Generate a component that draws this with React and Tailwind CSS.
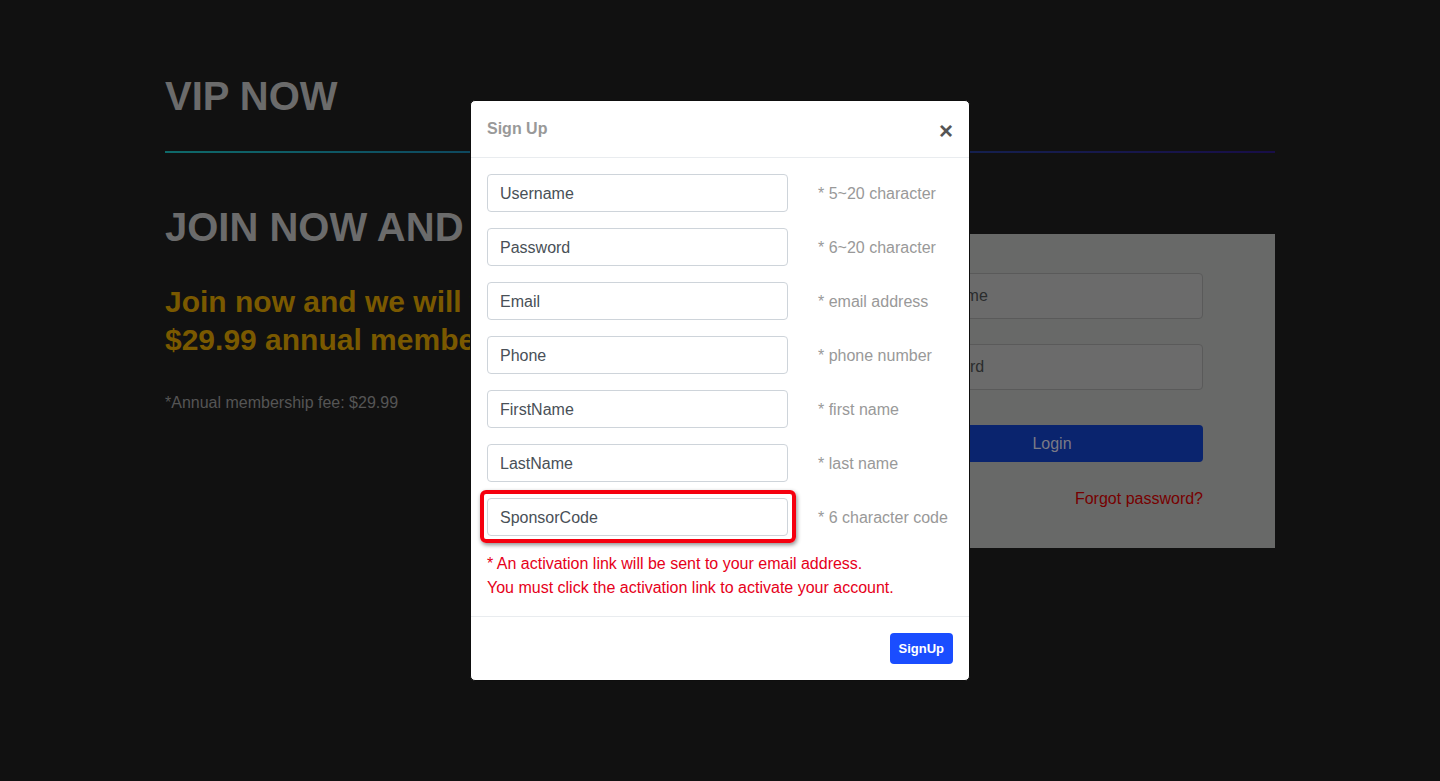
import React from "react";

const FIELDS = [
  { name: "Username", hint: "* 5~20 character" },
  { name: "Password", hint: "* 6~20 character" },
  { name: "Email", hint: "* email address" },
  { name: "Phone", hint: "* phone number" },
  { name: "FirstName", hint: "* first name" },
  { name: "LastName", hint: "* last name" },
  { name: "SponsorCode", hint: "* 6 character code", marked: true },
];

function Field({ name, hint, marked }) {
  return (
    <div className="mb-4 flex items-center">
      <div className="relative w-[301px]">
        <input
          className="block h-[38px] w-full rounded-[4px] border border-[#ced4da] bg-white px-3 pt-[1px] text-[16px] text-[#495057] outline-none placeholder:text-[#495057]"
          placeholder={name}
        />
        {marked && (
          <div className="pointer-events-none absolute -bottom-[7px] -left-[7px] -right-[8px] -top-[8px] rounded-[6px] border-4 border-[#f5000f] shadow-[1px_2px_4px_rgba(0,0,0,0.45)]" />
        )}
      </div>
      <span className="ml-[30px] pt-[1px] text-[16px] text-[#999]">{hint}</span>
    </div>
  );
}

export default function App() {
  // page colours are the dimmed tones seen through the modal backdrop
  return (
    <div className="relative h-[781px] overflow-hidden bg-[#111] font-['Liberation_Sans',Arial,sans-serif]">
      <div className="mx-auto w-[1110px] pt-[72px]">
        <h1 className="text-[40px] font-bold leading-[48px] text-[#6b6b6b]">VIP NOW</h1>
        <div className="mt-[31px] h-[2px] bg-linear-to-r from-[#0f6a6a] via-[#0e2d54] to-[#180e48]" />

        <div className="flex">
          <div className="w-[664px] pt-[50px]">
            <h2 className="text-[40px] font-bold leading-[48px] text-[#6b6b6b]">JOIN NOW AND GET VIP</h2>
            <p className="mt-[32px] text-[30px] font-bold leading-[38px] text-[#7a5900]">
              Join now and we will waive the
              <br />
              $29.99 annual membership fee!
            </p>
            <p className="mt-[32px] text-[16px] leading-[24px] text-[#555]">*Annual membership fee: $29.99</p>
          </div>

          <div className="mt-[81px] flex-1">
            <div className="bg-[#686968] px-[72px] pb-[37px] pt-[39px]">
              <input
                className="block h-[46px] w-full rounded-[4px] border border-[#5a5a5a] bg-[#6b6b6b] px-3 text-[16px] placeholder:text-[#2a2c2d]"
                placeholder="Username"
              />
              <input
                className="mt-[25px] block h-[46px] w-full rounded-[4px] border border-[#5a5a5a] bg-[#6b6b6b] px-3 text-[16px] placeholder:text-[#2a2c2d]"
                placeholder="Password"
                type="password"
              />
              <button className="mt-[35px] block h-[37px] w-full rounded-[4px] bg-[#0a246e] text-[16px] text-[#7a7a86]">Login</button>
              <p className="mt-[25px] text-right text-[16px] leading-[24px] text-[#770000]">Forgot password?</p>
            </div>
          </div>
        </div>
      </div>

      {/* modal layer */}
      <div className="absolute inset-0 flex justify-center pt-[100px]">
        <div className="h-fit w-[500px] rounded-[5px] border border-[#0e0e0e] bg-white">
          <div className="flex h-[57px] items-center justify-between border-b border-[#e9ecef] px-4">
            <span className="text-[16px] font-bold text-[#999]">Sign Up</span>
            <button className="mt-[3px] text-[24px] font-bold leading-none text-[#555]">×</button>
          </div>

          <div className="p-4">
            {FIELDS.map((f) => (
              <Field key={f.name} {...f} />
            ))}
            <p className="text-[16px] leading-[24px] text-[#e6001a]">
              * An activation link will be sent to your email address.
              <br />
              You must click the activation link to activate your account.
            </p>
          </div>

          <div className="flex justify-end border-t border-[#e9ecef] p-4">
            <button className="h-[31px] rounded-[4px] bg-[#1a4dff] px-[9px] text-[13px] font-bold text-white">SignUp</button>
          </div>
        </div>
      </div>
    </div>
  );
}
